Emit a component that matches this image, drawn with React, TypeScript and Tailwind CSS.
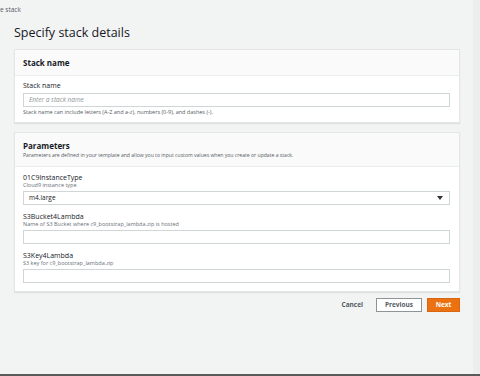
import React from 'react';

const font = { fontFamily: '"Open Sans", "Liberation Sans", sans-serif' };

interface FieldProps {
  label: string;
  hint?: string;
  children: React.ReactNode;
}

const Field: React.FC<FieldProps> = ({ label, hint, children }) => (
  <div className="flex flex-col">
    <div className="text-[7px] leading-[8px] text-[#16191f]">{label}</div>
    {hint && <div className="text-[5.5px] leading-[7px] text-[#687078]">{hint}</div>}
    <div className="mt-[2px]">{children}</div>
  </div>
);

const TextBox: React.FC<{ placeholder?: string }> = ({ placeholder }) => (
  <div className="h-[14px] border border-[#d0d5d5] bg-white flex items-center px-[5px]">
    {placeholder && <span className="text-[6.5px] italic text-[#8d9596]">{placeholder}</span>}
  </div>
);

export default function App() {
  return (
    <div style={font} className="w-[480px] h-[376px] bg-[#f2f3f3] flex flex-col overflow-hidden">
      <div className="flex-1 flex">
        {/* Content */}
        <div className="flex-1 pr-[13px]">
          <div className="h-[20px] flex items-center text-[6.5px] text-[#545b64]">e stack</div>
          <h1 className="pl-[14px] text-[12.5px] leading-[18px] text-[#16191f] mt-[4px]">Specify stack details</h1>

          <div className="ml-[14px] mt-[7px] bg-white border border-[#e4e6e6] shadow-[0_1px_1px_rgba(0,0,0,0.08)]">
            <div className="h-[26px] bg-[#fafafa] border-b border-[#eaeded] flex items-center px-[8px]">
              <span className="text-[8px] font-bold text-[#16191f]">Stack name</span>
            </div>
            <div className="pl-[8px] pr-[9px] pt-[6px] pb-[6px]">
              <div className="text-[7px] leading-[8px] text-[#16191f]">Stack name</div>
              <div className="mt-[3px]">
                <TextBox placeholder="Enter a stack name" />
              </div>
              <div className="mt-[1px] text-[5.5px] leading-[8px] text-[#545b64]">
                Stack name can include letters (A-Z and a-z), numbers (0-9), and dashes (-).
              </div>
            </div>
          </div>

          <div className="ml-[14px] mt-[9px] bg-white border border-[#e4e6e6] shadow-[0_1px_1px_rgba(0,0,0,0.08)]">
            <div className="h-[34px] bg-[#fafafa] border-b border-[#eaeded] flex flex-col justify-center px-[8px]">
              <span className="text-[8px] leading-[11px] font-bold text-[#16191f]">Parameters</span>
              <span className="text-[5.1px] leading-[8px] text-[#545b64]">
                Parameters are defined in your template and allow you to input custom values when you create or update a stack.
              </span>
            </div>
            <div className="pl-[8px] pr-[9px] pt-[7px] pb-[8px] flex flex-col gap-[8px]">
              <Field label="01C9InstanceType" hint="Cloud9 instance type">
                <div className="h-[14px] border border-[#d0d5d5] bg-white flex items-center justify-between pl-[5px] pr-[6px]">
                  <span className="text-[6.5px] text-[#16191f]">m4.large</span>
                  <svg width="6" height="4" viewBox="0 0 6 4">
                    <path d="M0 0 L6 0 L3 4 Z" fill="#333" />
                  </svg>
                </div>
              </Field>
              <Field label="S3Bucket4Lambda" hint="Name of S3 Bucket where c9_bootstrap_lambda.zip is hosted">
                <TextBox />
              </Field>
              <Field label="S3Key4Lambda" hint="S3 key for c9_bootstrap_lambda.zip">
                <TextBox />
              </Field>
            </div>
          </div>

          <div className="mt-[6px] flex items-center justify-end gap-[5px]">
            <button className="text-[6.5px] font-bold text-[#545b64] px-[8px] h-[14px]">Cancel</button>
            <button className="h-[14px] w-[46px] border border-[#8d9596] bg-white text-[6.5px] font-bold text-[#545b64]">
              Previous
            </button>
            <button className="h-[14px] w-[33px] bg-[#ec7211] border border-[#d86613] text-[6.5px] font-bold text-white">
              Next
            </button>
          </div>
        </div>
        {/* Scrollbar track */}
        <div className="w-[7px] bg-[#ededed]" />
      </div>
      <div className="h-[2px] bg-[#5a5a5a]" />
    </div>
  );
}
